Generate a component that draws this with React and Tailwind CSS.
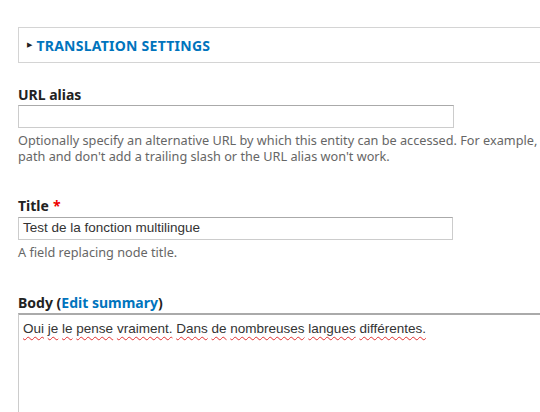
import React from 'react';

const sans = { fontFamily: '"Noto Sans", "DejaVu Sans", sans-serif' };
const arial = { fontFamily: '"Liberation Sans", Arial, sans-serif' };

const Word = ({ children }) => (
  <span className="underline decoration-wavy decoration-[#e03030] decoration-1 underline-offset-[3px]">{children}</span>
);

const FieldLabel = ({ children, required }) => (
  <div className="text-[14px] leading-[18px] font-bold text-[#222]">
    {children}
    {required && <span className="text-[#e00] ml-1">*</span>}
  </div>
);

const Description = ({ lines }) => (
  <div className="mt-1 text-[12.7px] leading-4 text-[#666] whitespace-nowrap">
    {lines.map((line, i) => (
      <div key={i}>{line}</div>
    ))}
  </div>
);

const App = () => {
  const body = ['Oui', 'je', 'le', 'pense', 'vraiment.', 'Dans', 'de', 'nombreuses', 'langues', 'différentes.'];

  return (
    <div className="w-[540px] h-[412px] overflow-hidden bg-white pl-[18px]" style={sans}>
      {/* Translation settings */}
      <div className="mt-[27px] h-[36px] w-[560px] border border-[#d4d4d4] flex items-center pl-[8px]">
        <span className="text-[7px] text-[#222] mr-[4px]">▶</span>
        <span className="text-[14px] font-bold tracking-[0.25px] text-[#0074bd]">TRANSLATION SETTINGS</span>
      </div>

      {/* URL alias */}
      <div className="mt-[23px]">
        <FieldLabel>URL alias</FieldLabel>
        <div className="mt-px w-[436px] h-[23px] border border-[#ccc] border-t-[#aaa] bg-white" />
        <Description
          lines={[
            'Optionally specify an alternative URL by which this entity can be accessed. For example,',
            "path and don't add a trailing slash or the URL alias won't work.",
          ]}
        />
      </div>

      {/* Title */}
      <div className="mt-[33px]">
        <FieldLabel required>Title</FieldLabel>
        <div
          className="mt-[2px] w-[435px] h-[23px] border border-[#ccc] border-t-[#aaa] px-[4px] flex items-center text-[13.5px] text-[#333]"
          style={arial}
        >
          Test de la fonction multilingue
        </div>
        <Description lines={['A field replacing node title.']} />
      </div>

      {/* Body */}
      <div className="mt-[34px]">
        <FieldLabel>
          Body (<span className="text-[#0074bd]">Edit summary</span>)
        </FieldLabel>
        <div
          className="mt-px w-[560px] h-[120px] border border-[#ccc] border-t-2 border-t-[#aaa] px-[4px] pt-[6px] text-[13.5px] leading-4 text-[#333]"
          style={arial}
        >
          {body.map((w, i) => (
            <React.Fragment key={i}>
              <Word>{w}</Word>{i < body.length - 1 ? ' ' : ''}
            </React.Fragment>
          ))}
        </div>
      </div>
    </div>
  );
};

export default App;
